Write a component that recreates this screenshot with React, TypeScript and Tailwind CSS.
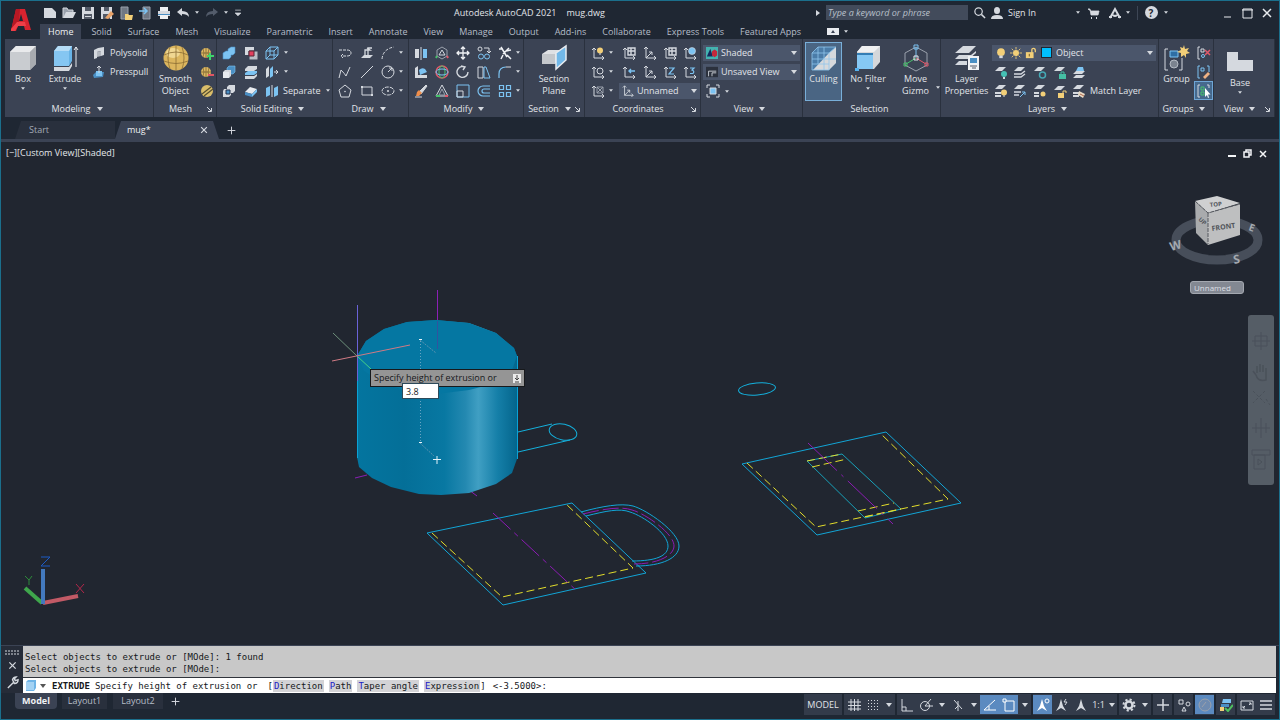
import type { ReactNode } from 'react'

const L = '#d5d9df'
const B = '#7cc3f2'
const D = '#4a8fc4'
const Y = '#f2cf78'
const G = '#9aa1ac'

/* 14x14 toolbar glyphs */
const glyphs: Record<string, ReactNode> = {
  polysolid: <><path d="M2 4l4-2 6-1v8l-3 1V5L5 6v6l-3 1z" fill={L} stroke="none" /><path d="M5 6l4-1v5L5 11z" fill="#b4b9c1" stroke="none" /></>,
  presspull: <><path d="M1 10l3-3h8l-1 5-9 1z" fill={D} stroke="none" /><path d="M4 6h6v5H4z" fill={B} stroke="none" /><path d="M7 1v7M5 3l2-2 2 2" stroke={L} /></>,
  meshMore: <><circle cx="6" cy="7" r="5" fill="#dfb963" stroke="none" /><path d="M1 7h10M6 2v10M3 3q2 4 0 8M9 3q-2 4 0 8" stroke="#6e5a2c" strokeWidth=".7" /><path d="M10 7v7M7 10h7" stroke="#3fd46b" strokeWidth="2" /></>,
  meshLess: <><circle cx="6" cy="7" r="5" fill="#dfb963" stroke="none" /><path d="M1 7h10M6 2v10M3 3q2 4 0 8M9 3q-2 4 0 8" stroke="#6e5a2c" strokeWidth=".7" /><path d="M8 10h6" stroke="#e05563" strokeWidth="2" /></>,
  meshRefine: <><circle cx="7" cy="7" r="6" fill="#d9bd6a" stroke="none" /><path d="M2 10l9-7M4 12l9-7" stroke="#57502f" strokeWidth="1.2" /></>,
  union: <path d="M1 7l3-2h2V3l3-2h4v6l-2 2H9v2l-2 2H1z" fill={B} stroke={D} strokeWidth=".6" />,
  subtract: <><path d="M5 3l2-2h6v6l-2 2H5z" fill={D} stroke={B} strokeWidth=".6" /><path d="M1 7l2-2h6v6l-2 2H1z" fill={L} stroke="none" /><path d="M1 7h6v6H1z" fill="#e7eaef" stroke="none" /></>,
  intersect: <><path d="M5 3l2-2h6v6l-2 2H5z" fill={L} stroke="none" /><path d="M1 7l1-2h7v6l-2 2H1z" fill={L} stroke="none" /><path d="M4 6h4v4H4z" fill={D} stroke="#22304a" /></>,
  interfere: <><path d="M1 1h9v8H1z" fill={L} stroke="none" /><path d="M5 5h9v9H5z" fill="#b9bec6" stroke="#3b4354" /><path d="M5 5h5v5H5z" fill="#e3405f" stroke="#5c2434" /></>,
  slice: <><path d="M1 4l3-3h9v3l-3 2H1z" fill={L} stroke="none" /><path d="M1 8l3-2h9v2l-3 2H1z" fill={B} stroke="none" /><path d="M1 11h9l3-2v2l-3 3H1z" fill={L} stroke="none" /></>,
  thicken: <><path d="M1 8l5-5 7 2-5 5z" fill="#e9ecf0" stroke="none" /><path d="M1 8l7 2v3L1 11z" fill={D} stroke="none" /><path d="M8 10l5-5v3l-5 5z" fill={B} stroke="none" /></>,
  edges: <path d="M1 5h8v8H1zM1 5l4-4h8v8l-4 4M9 5l4-4M5 1v8h8M5 9l-4 4" stroke={B} />,
  faces: <><path d="M1 4l3-3v10l-3 2z" fill={L} stroke="none" /><path d="M5 4l3-3v10l-3 2z" fill={B} stroke="none" /><path d="M9 7h4M11 5l2 2-2 2" stroke={L} /></>,
  separate: <><path d="M1 4l4-2v9l-4 2z" fill={B} stroke="none" /><path d="M9 4l4-2v9l-4 2z" fill={B} stroke="none" /><path d="M7 1v12" stroke={L} /></>,
  polyline: <path d="M1 4h8q4 0 4 3t-4 3H3M5 8l-2 2 2 2" stroke={L} strokeDasharray="3 1" />,
  helix: <><path d="M1 12l3-3h9l-3 3z" fill={L} stroke="none" /><path d="M5 9V4h5l-3-2M8 9V2h4" stroke={L} strokeWidth="1.3" /></>,
  arc: <path d="M1 13Q2 3 13 1" stroke={L} strokeDasharray="3 1.5" />,
  spline: <path d="M1 13l2-8q4 4 5 6l4-9" stroke={L} />,
  line: <path d="M1 13L13 1" stroke={L} />,
  circle: <><circle cx="7" cy="7" r="6" stroke={L} /><path d="M7 7l4-4M8 3h3v3" stroke={L} /></>,
  polygon: <><path d="M7 1l6 5-2 7H3L1 6z" stroke={L} /><circle cx="7" cy="7.5" r=".8" fill={L} /></>,
  rect: <><path d="M2 3h10v8H2z" stroke={L} /><path d="M1 2h2v2H1zM11 10h2v2h-2z" fill={L} stroke="none" /></>,
  ellipse: <><ellipse cx="7" cy="7" rx="6" ry="4" stroke={L} strokeDasharray="4 1" /><path d="M6 7h2M7 6v2" stroke={L} /></>,
  mirror: <><path d="M1 3h4v9H1z" fill={L} stroke="none" /><path d="M9 3h4v9H9z" fill={B} stroke="none" /><path d="M7 1v13" stroke={L} /></>,
  fillet3d: <><path d="M1 3l3-2v9h9v3H1z" fill={L} stroke="none" /><path d="M5 5q3-3 6-1l2 3-7 3z" fill={B} stroke="none" /></>,
  erase: <><path d="M5 8l7-7 1 1-6 8z" fill={L} stroke={L} /><path d="M5 6l3 3-3 3H2l1-4z" fill="#ef8d4a" stroke="none" /><path d="M1 13h7" stroke={L} /></>,
  gizmo1: <><path d="M7 1l5 3v6l-5 3-5-3V4z" stroke={G} /><path d="M7 4l3 5H4z" stroke={L} /><path d="M2 10l-1 2" stroke="#47c26b" strokeWidth="2" /><path d="M12 10l1 2" stroke="#e2596a" strokeWidth="2" /></>,
  gizmo2: <><circle cx="7" cy="7" r="6" stroke="#e2596a" strokeWidth="1.4" /><ellipse cx="7" cy="7" rx="3" ry="6" stroke="#47c26b" /><ellipse cx="7" cy="7" rx="6" ry="3" stroke={B} /></>,
  gizmo3: <><path d="M7 1l6 11H1z" stroke={L} /><path d="M7 5l3 6H4z" stroke={G} /><path d="M1 12h4" stroke="#47c26b" strokeWidth="2" /><path d="M10 12h3" stroke="#e2596a" strokeWidth="2" /></>,
  move: <path d="M7 1v12M1 7h12M5 3l2-2 2 2M5 11l2 2 2-2M3 5L1 7l2 2M11 5l2 2-2 2" stroke="#f0f2f5" strokeWidth="1.3" />,
  rotate: <path d="M9 2a5.5 5.5 0 1 0 3 5M5 1l4 1-2 3" stroke={L} strokeWidth="1.4" />,
  scale: <><path d="M1 1h12v12H1z" stroke={B} /><path d="M1 7h6v6H1z" stroke={L} /></>,
  copy: <><circle cx="3" cy="3" r="2" stroke={L} /><path d="M7 2h5v4M10 5l2 2 2-2" stroke={L} /><circle cx="4" cy="10.5" r="2.5" stroke={B} /><circle cx="10" cy="10.5" r="2.5" stroke={B} /></>,
  stretch: <><path d="M1 2h5v11H1z" stroke={L} /><path d="M7 2h2l4 11H7z" stroke={B} /></>,
  offset: <path d="M13 2H6a5 5 0 0 0 0 10h7M13 5H7a2 2 0 0 0 0 4h6" stroke={B} strokeWidth="1.2" />,
  trim: <path d="M1 3h4M3 1l6 10M11 2L5 8M9 9l4 4M8 5l5-1M5 9l-2 4" stroke="#f0f2f5" strokeWidth="1.5" />,
  fillet: <><path d="M1 13V9q0-7 7-7" stroke={B} strokeWidth="1.2" /><path d="M8 2h5" stroke={L} /></>,
  array: <path d="M1.500 1.500h4v4h-4zM8.500 1.500h4v4h-4zM1.500 8.500h4v4h-4zM8.500 8.500h4v4h-4z" stroke={B} strokeWidth="1.2" />,
  ucs: <path d="M3 1v11h10M1 3l2-2 2 2M11 10l2 2-2 2M3 12l6-6M6 6h3v3" stroke={L} />,
  ucsBulb: <><path d="M3 2v10h10M1 4l2-2 2 2M11 10l2 2-2 2" stroke={L} /><circle cx="9" cy="4.500" r="3" fill={Y} stroke="none" /><path d="M8 8h2" stroke={L} /></>,
  ucsWorld: <><path d="M3 2v10h10M1 4l2-2 2 2M11 10l2 2-2 2" stroke={L} /><circle cx="9" cy="5" r="3.500" fill={B} stroke={L} strokeWidth=".6" /></>,
  ucsNamed: <><path d="M3 2v10h10M1 4l2-2 2 2M11 10l2 2-2 2" stroke={L} /><path d="M6 2h7v7H6zM6 5h7M9 2v7" stroke={L} strokeWidth="1.4" /></>,
  ucsTurn: <><path d="M3 2v10h10M1 4l2-2 2 2M11 10l2 2-2 2" stroke={L} /><circle cx="9" cy="6" r="3" stroke={L} /></>,
  ucsArrow: <><path d="M3 2v10h10M1 4l2-2 2 2M11 10l2 2-2 2" stroke={L} /><path d="M13 6H7M9 4L7 6l2 2" stroke={B} strokeWidth="1.4" /></>,
  ucsZ: <><path d="M3 2v10h10M1 4l2-2 2 2M11 10l2 2-2 2" stroke={L} /><path d="M6 3h5L6 9h5" stroke={B} strokeWidth="1.2" /></>,
  ucs3: <><path d="M3 2v10h10M1 4l2-2 2 2M11 10l2 2-2 2" stroke={L} /><path d="M7 3h4L9 5q3 1 1 3.500H7" stroke={B} strokeWidth="1.2" /></>,
  ucsFace: <><path d="M3 2v10h10M1 4l2-2 2 2M11 10l2 2-2 2" stroke={L} /><path d="M6 3h6v6H6zM6 3l6 6M12 3L6 9" stroke={G} /></>,
  shaded: <><path d="M0 0h14v14H0z" fill="#43b3b0" stroke="none" /><path d="M1 11l4-9 3 9z" fill="#152a5e" stroke="none" /><path d="M7 5l3-2 3 2v5l-3 2-3-2z" fill="#c4283b" stroke="none" /></>,
  savedView: <><path d="M0 1h14v12H0z" fill="#2b313d" stroke="none" /><path d="M3 12V6h9M7 12V8h5" stroke={L} /></>,
  viewport: <><path d="M1 4V1h3M10 1h3v3M13 10v3h-3M4 13H1v-3" stroke={L} /><path d="M4 4h6v6H4z" fill={B} stroke={L} /></>,
  bulb: <><circle cx="7" cy="6" r="4.500" fill={Y} stroke="none" /><path d="M5 10h4v3H5z" fill={L} stroke="none" /></>,
  sun: <><circle cx="7" cy="7" r="3.500" fill={Y} stroke="none" /><path d="M7 0v3M7 11v3M0 7h3M11 7h3M2 2l2 2M10 10l2 2M12 2l-2 2M4 10l-2 2" stroke={Y} /></>,
  lock: <><path d="M1 6h9v7H1z" fill={Y} stroke="none" /><path d="M8 7V3q0-1.500 2-1.500T12 4v2" stroke={Y} strokeWidth="1.5" /><path d="M5 8v3" stroke="#5c4a1e" /></>,
  layOff: <><path d="M1 6l4-4h7L8 6z" fill={L} stroke="none" /><circle cx="10" cy="9" r="3" fill="#45c0b4" stroke="none" /><path d="M9 12h2v2H9z" fill={L} stroke="none" /></>,
  layIso: <><path d="M1 6l4-4h7L8 6z" fill={L} stroke="none" /><path d="M1 9h7l4-3M1 12h7l4-3" stroke={L} strokeWidth="1.4" /></>,
  layFreeze: <><path d="M1 6l4-4h7L8 6z" fill={L} stroke="none" /><circle cx="9.500" cy="10" r="3" stroke="#45a8b4" strokeWidth="1.5" /></>,
  layLock: <><path d="M1 6l4-4h7L8 6z" fill={L} stroke="none" /><path d="M6 9h7v5H6z" fill="#45c0a4" stroke="none" /><path d="M8 9V7h3v2" stroke="#45c0a4" /></>,
  layCurrent: <><path d="M1 13l3-3h9l-3 3zM1 9l3-3h9l-3 3z" fill={L} stroke="none" /><path d="M4 6l2-4h5l1 4z" fill={B} stroke="none" /></>,
  layOn: <><path d="M1 5l4-4h7L8 5zM1 8h6v2H1zM1 11h6v2H1z" fill={L} stroke="none" /><circle cx="10" cy="8.500" r="3" fill={Y} stroke="none" /><path d="M9 12h2" stroke={L} /></>,
  layUniso: <><path d="M1 5l4-4h7L8 5z" fill={L} stroke="none" /><path d="M1 8h7M1 11h5" stroke={L} strokeWidth="1.6" /><path d="M7 13l5-5M9 8h3v3" stroke={B} /></>,
  layThaw: <><path d="M1 5l4-4h7L8 5zM1 8h5v2H1zM1 11h5v2H1z" fill={L} stroke="none" /><circle cx="10" cy="10" r="2.500" fill={Y} stroke="none" /></>,
  layUnlock: <><path d="M1 6l4-4h7L8 6z" fill={L} stroke="none" /><path d="M5 9h6v5H5z" fill={Y} stroke="none" /><path d="M10 9V7h3v2" stroke={Y} /></>,
  layMatch: <><path d="M1 5l4-4h7L8 5zM1 8h6v2H1zM1 11h6v2H1z" fill={L} stroke="none" /><path d="M7 7l6 3-2 4-5-3z" fill="#e9dcc6" stroke="none" /><path d="M8 10l4 2" stroke="#b0664a" /></>,
  ungroup: <><path d="M3 1H1v12h2M4 3h3v3H4z" stroke={L} /><circle cx="6" cy="10" r="1.500" stroke={B} /><path d="M8 4l5 5M13 4L8 9" stroke="#e2596a" strokeWidth="1.5" /></>,
  groupEdit: <><path d="M3 1H1v12h2M10 1h2v6M4 3h3v3H4z" stroke={B} /><path d="M6 12l5-5 2 2-5 5z" fill="#efb183" stroke="none" /></>,
  groupSelect: <><path d="M3 1H1v12h2M10 1h2v3" stroke={L} /><path d="M4 3h3v3H4zM4 8h3v3H4z" stroke="#47c26b" /><path d="M8 4v9l2-2 1 3 1-.5-1-3h2.500z" fill="#fff" stroke="none" /></>,
  newFile: <path d="M1 2h8l4 4v6H1z" fill={L} stroke="none" />,
  open: <><path d="M1 12V2h4l1 2h5v3" stroke={L} fill="#9aa1ac" /><path d="M1 12l3-6h10l-3 6z" fill={L} stroke="none" /></>,
  save: <><path d="M1 1h12v12H1z" fill={L} stroke="none" /><path d="M4 1h6v4H4zM3 8h8v5H3z" fill="#525966" stroke="none" /><path d="M4 10h6v1H4z" fill={L} stroke="none" /></>,
  saveAs: <><path d="M1 1h11v12H1z" fill={L} stroke="none" /><path d="M4 1h5v4H4zM3 8h7v5H3z" fill="#525966" stroke="none" /><path d="M5 12l6-7 3 3-6 5z" fill="#e8a36a" stroke="none" /></>,
  webOpen: <><path d="M2 1h7v12H2z" fill="#6f7783" stroke={G} /><path d="M6 8h3l1 1h4l-1 5H6z" fill={Y} stroke="none" /></>,
  webSave: <><path d="M5 1h7v12H5z" fill="#6f7783" stroke={G} /><path d="M1 5h7M6 2l3 3-3 3" stroke={B} strokeWidth="1.5" /></>,
  print: <><path d="M3 1h8v4H3z" fill="#eef0f3" stroke="none" /><path d="M1 5h12v5H1z" fill={L} stroke="none" /><path d="M1 8h12v1H1z" fill={D} stroke="none" /><path d="M3 9h8v4H3z" fill="#eef0f3" stroke="none" /></>,
  undo: <path d="M1 6l5-4v3q7 0 7 6-2-3-7-3v2z" fill={L} stroke="none" />,
  redo: <path d="M13 6L8 2v3q-7 0-7 6 2-3 7-3v2z" fill="#535c6b" stroke="none" />,
  customize: <path d="M3 3h8M3 7h8l-4 4z" stroke={L} fill={L} />,
  search: <><circle cx="6" cy="6" r="4" stroke={L} strokeWidth="1.3" /><path d="M9 9l4 4" stroke={L} strokeWidth="1.6" /></>,
  user: <><ellipse cx="7" cy="4.500" rx="3" ry="3.500" fill={L} stroke="none" /><path d="M1 13q0-4 6-4t6 4z" fill={L} stroke="none" /></>,
  cart: <><path d="M2 3h2l1 6h7l1-4H5z" fill={L} stroke={L} strokeWidth=".8" /><path d="M5 12h1M10 12h1" stroke={L} strokeWidth="2" /></>,
  appStore: <path d="M2 12l5-9 5 9M1 11h3M10 11h3M5 9q2 2 4 0" stroke={L} strokeWidth="2" />,
  grid: <path d="M4 1v12M7.500 1v12M11 1v12M1 4h13M1 7.500h13M1 11h13" stroke={L} />,
  snap: <path d="M2 2.500h11M2 5.500h11M2 8.500h11M2 11.500h11" stroke={L} strokeDasharray="1 2" />,
  ortho: <path d="M2 1v12h11M2 9h4v4" stroke={L} />,
  polar: <><circle cx="6" cy="8" r="4.500" stroke={L} /><path d="M6 8h8M6 8l6-7" stroke={L} /></>,
  isoplane: <path d="M3 2l8 9M7 3v10M7 8l-3 3" stroke={L} />,
  otrack: <path d="M1 12h12M1 12L12 2M6 8v4" stroke="#fff" />,
  osnap: <><path d="M3 3h9v10H3z" stroke="#fff" /><path d="M1 1h3v3H1z" fill="#5b8ac0" stroke="#fff" /></>,
  annoVis: <><path d="M6 1l2 7 3 5-5-3-5 3 3-5z" fill="#fff" stroke="none" /><circle cx="11" cy="3" r="2" stroke="#fff" /></>,
  annoAuto: <><path d="M6 1l2 7 3 5-5-3-5 3 3-5z" fill={L} stroke="none" /><path d="M11 1l-2 3h3l-2 3" stroke={L} /></>,
  anno: <path d="M7 1l2 7 3 5-5-3-5 3 3-5z" fill={L} stroke="none" />,
  gear: <><circle cx="7" cy="7" r="5.500" stroke={L} strokeDasharray="2.200 2.100" strokeWidth="2" /><circle cx="7" cy="7" r="3.500" stroke={L} strokeWidth="2.500" /></>,
  plus: <path d="M7 1v12M1 7h12" stroke={L} strokeWidth="1.5" />,
  units: <><path d="M2 2h4v4H2zM5 13l2-4 2 4z" stroke={L} /><circle cx="11" cy="6" r="2" stroke={L} /></>,
  isolate: <><circle cx="7" cy="7" r="6" fill="#6f8bb0" stroke={G} /><path d="M4 9l4-5" stroke={G} /></>,
  hardware: <><path d="M4 1h8v4H3z" fill={B} stroke="none" /><path d="M2 6h8v3H2z" fill={D} stroke="none" /><path d="M1 9h4v4H1z" fill={Y} stroke="none" /><path d="M6 10l3 3 5-6" stroke="#4fc05f" strokeWidth="2" /></>,
  clean: <><path d="M1 3h12v9H1z" stroke={L} /><path d="M3 10l2-2M9 7l2-2M3 8v2h2M9 5h2v2" stroke={L} /></>,
  menu: <path d="M1 3h12M1 7h12M1 11h12" stroke={L} strokeWidth="1.6" />,
  close: <path d="M3 3l8 8M11 3l-8 8" stroke={L} strokeWidth="1.6" />,
  wrench: <path d="M2 13l6-6M7 4q1-3 4-3L9 3l1 2 3-1q0 4-4 4z" stroke={L} strokeWidth="1.5" />,
}

function Glyph({ name, size = 14 }: { name: string; size?: number }) {
  return (
    <svg width={size} height={size} viewBox="0 0 14 14" fill="none" className="shrink-0" aria-hidden="true">
      {glyphs[name]}
    </svg>
  )
}

function Caret({ small }: { small?: boolean }) {
  return (
    <svg width={small ? 4 : 6} height={small ? 3 : 4} viewBox="0 0 6 4" className="shrink-0" aria-hidden="true">
      <path d="M0 0h6L3 4z" fill="#d5d9df" />
    </svg>
  )
}

interface ToolProps {
  icon: string
  label: string
  text?: boolean
  caret?: boolean
  active?: boolean
}

function Tool({ icon, label, text, caret, active }: ToolProps) {
  return (
    <button
      aria-label={label}
      className={`flex h-[19px] items-center gap-1 whitespace-nowrap ${text ? 'justify-start pl-[3px]' : 'justify-center'} ${active ? 'bg-[#46698d] outline outline-1 -outline-offset-1 outline-[#6fa6d6]' : ''}`}
    >
      <Glyph name={icon} />
      {text && <span>{label}</span>}
      {caret && <span className={text ? 'pl-[2px]' : ''}><Caret small /></span>}
    </button>
  )
}

interface BigToolProps {
  lines: string[]
  children: ReactNode
  caret?: boolean
  className?: string
}

function BigTool({ lines, children, caret, className = '' }: BigToolProps) {
  return (
    <button className={`flex h-[57px] shrink-0 flex-col items-center pt-px leading-[12px] ${className}`}>
      <svg width="28" height="28" viewBox="0 0 28 28" fill="none" className="mb-px shrink-0" aria-hidden="true">{children}</svg>
      {lines.map((line) => (
        <span key={line} className="whitespace-nowrap">{line}</span>
      ))}
      {caret && <span className="flex h-[6px] items-center"><Caret small /></span>}
    </button>
  )
}

interface PanelProps {
  title: string
  caret?: boolean
  launcher?: boolean
  children: ReactNode
}

function Panel({ title, caret, launcher, children }: PanelProps) {
  return (
    <section className="flex min-w-0 flex-col border-r border-[#2a313e] pt-1">
      <div className="flex h-[57px]">{children}</div>
      <div className="flex h-[17px] items-center pt-px pr-1">
        <h2 className="flex flex-1 items-center justify-center gap-[6px] whitespace-nowrap">
          {title}
          {caret && <Caret />}
        </h2>
        {launcher && (
          <button aria-label={`${title} settings`}>
            <svg width="5" height="5" viewBox="0 0 5 5" fill="none"><path d="M0 0l4 4M1 4.500h3.500V1" stroke="#d5d9df" /></svg>
          </button>
        )}
      </div>
    </section>
  )
}

function Combo({ label, value, children, className = '' }: { label: string; value: string; children: ReactNode; className?: string }) {
  return (
    <label className={`flex h-4 items-center gap-[3px] bg-[#4b566b] px-[3px] ${className}`}>
      {children}
      <select aria-label={label} className="min-w-0 flex-1 appearance-none bg-transparent text-[9px] outline-none">
        <option>{value}</option>
      </select>
      <Caret />
    </label>
  )
}

const quickAccess = [
  ['newFile', 'New'], ['open', 'Open'], ['save', 'Save'], ['saveAs', 'Save As'],
  ['webOpen', 'Open from Web'], ['webSave', 'Save to Web'], ['print', 'Plot'],
]

const ribbonTabs = [
  'Solid', 'Surface', 'Mesh', 'Visualize', 'Parametric', 'Insert', 'Annotate', 'View', 'Manage',
  'Output', 'Add-ins', 'Collaborate', 'Express Tools', 'Featured Apps',
]

function Header() {
  return (
    <header className="flex h-[38px] shrink-0">
      <button aria-label="Application menu" className="flex w-[39px] items-center justify-center">
        <svg width="22" height="26" viewBox="0 0 22 26">
          <path d="M6 2h9l6 21h-6l-1-4H8l-2 5H1z" fill="#d8232f" />
          <path d="M11 7l2 7H9z" fill="#1f2733" />
          <path d="M6 2h4l-1 12-3 9H1z" fill="#b81824" />
          <path d="M1 22l6-7h8l1 4H8l-3 5H1z" fill="#ef3f48" />
        </svg>
      </button>
      <div className="flex min-w-0 flex-1 flex-col">
        <div className="flex h-[23px] items-center">
          <div className="flex items-center">
            {quickAccess.map(([icon, label]) => (
              <button key={icon} aria-label={label} className="flex w-[19px] justify-center"><Glyph name={icon} /></button>
            ))}
            <button aria-label="Undo" className="flex w-[29px] items-center justify-center gap-[5px]"><Glyph name="undo" /><Caret small /></button>
            <button aria-label="Redo" className="flex w-[29px] items-center justify-center gap-[5px]"><Glyph name="redo" /><Caret small /></button>
            <button aria-label="Customize" className="ml-[2px]"><Glyph name="customize" size={10} /></button>
          </div>
          <h1 className="flex flex-1 justify-center gap-[10px] whitespace-nowrap">
            <span>Autodesk AutoCAD 2021</span>
            <span>mug.dwg</span>
          </h1>
          <div className="mr-[3px] flex items-center">
            <svg width="4" height="6" viewBox="0 0 4 6" className="mr-[6px]"><path d="M0 0l4 3-4 3z" fill="#d5d9df" /></svg>
            <input
              aria-label="Search"
              placeholder="Type a keyword or phrase"
              className="h-[15px] w-[142px] bg-[#424b5b] px-[2px] text-[9px] italic outline-none placeholder:text-[#b9c0ca]"
            />
            <button aria-label="Search" className="flex w-[22px] justify-center"><Glyph name="search" size={13} /></button>
            <button className="flex items-center gap-1 whitespace-nowrap"><Glyph name="user" />Sign In</button>
            <button aria-label="Account" className="ml-[36px] flex w-3 justify-center"><Caret small /></button>
            <button aria-label="Store" className="flex w-[18px] justify-center"><Glyph name="cart" /></button>
            <button aria-label="Apps" className="mr-[2px] flex w-[33px] items-center justify-center gap-1"><Glyph name="appStore" /><Caret small /></button>
            <span className="h-[14px] w-px bg-[#3d4655]" />
            <button aria-label="Help" className="flex w-[36px] items-center justify-center gap-[6px]">
              <span className="flex h-[13px] w-[13px] items-center justify-center rounded-full bg-[#d5d9df] text-[10px] font-bold text-[#1f2733]">?</span>
              <Caret small />
            </button>
            <svg width="62" height="14" viewBox="0 0 62 14" fill="none" className="ml-[40px]" stroke="#e8ebef">
              <path d="M10 11h7M29 3h9v9h-9zM28 4h11" />
              <path d="M49 3l8 8M57 3l-8 8" strokeWidth="1.5" />
            </svg>
          </div>
        </div>
        <nav className="flex h-[15px] items-stretch whitespace-nowrap text-[#b6bdc8]">
          <button className="mr-[2px] bg-[#3b4354] px-2 text-[#eef0f3]">Home</button>
          {ribbonTabs.map((tab) => <button key={tab} className="px-2">{tab}</button>)}
          <button aria-label="Minimize ribbon" className="ml-[18px] flex items-center gap-[5px]">
            <svg width="12" height="7" viewBox="0 0 12 7"><path d="M0 0h12v7H0z" fill="#e8ebef" /><path d="M4 5l2-3 2 3z" fill="#3b4354" /></svg>
            <Caret small />
          </button>
        </nav>
      </div>
    </header>
  )
}

function Ribbon() {
  return (
    <div className="mx-1 grid h-[78px] shrink-0 grid-cols-[149fr_63fr_116fr_76fr_115fr_61fr_116fr_102fr_138fr_218fr_55fr_61fr] bg-[#3b4354]">
      <Panel title="Modeling" caret>
        <BigTool lines={['Box']} caret className="w-[36px]">
          <path d="M1 8l6-6h20v18l-6 6H1z" fill="#c9ccd0" /><path d="M1 8l6-6h20l-6 6z" fill="#e9eaec" /><path d="M21 8l6-6v18l-6 6z" fill="#a8abb0" />
        </BigTool>
        <BigTool lines={['Extrude']} caret className="w-[48px]">
          <path d="M3 7l4-5h14v15l-3 5H3z" fill="#67b3e6" /><path d="M3 7l4-5h14l-3 5z" fill="#b5dcf6" /><path d="M3 7h15v15H3z" fill="#85c6f2" />
          <path d="M3 23h15l3-4v3l-3 5H3z" fill="#d5d9df" /><path d="M25 23V3M23 6l2-3 2 3" stroke="#e8ebef" />
        </BigTool>
        <div className="flex flex-col">
          <Tool icon="polysolid" label="Polysolid" text />
          <Tool icon="presspull" label="Presspull" text />
        </div>
      </Panel>
      <Panel title="Mesh" launcher>
        <BigTool lines={['Smooth', 'Object']} className="w-[43px]">
          <circle cx="14" cy="14" r="12.500" fill="#dcb65e" /><ellipse cx="11" cy="9" rx="7" ry="5" fill="#f0d791" />
          <path d="M2 11q12-6 24 0M2 17q12 5 24 0M14 1.500v25M8 3q-4 11 0 22M20 3q4 11 0 22" stroke="#8a6c33" strokeWidth=".8" />
        </BigTool>
        <div className="grid flex-1">
          <Tool icon="meshMore" label="Smooth more" />
          <Tool icon="meshLess" label="Smooth less" />
          <Tool icon="meshRefine" label="Refine mesh" />
        </div>
      </Panel>
      <Panel title="Solid Editing" caret>
        <div className="grid grid-cols-[23px_22px_69px]">
          <Tool icon="union" label="Union" />
          <Tool icon="interfere" label="Interfere" />
          <div className="flex items-center gap-[5px] pl-[3px]"><Glyph name="edges" /><Caret small /></div>
          <Tool icon="subtract" label="Subtract" />
          <Tool icon="slice" label="Slice" />
          <div className="flex items-center gap-[5px] pl-[3px]"><Glyph name="faces" /><Caret small /></div>
          <Tool icon="intersect" label="Intersect" />
          <Tool icon="thicken" label="Thicken" />
          <Tool icon="separate" label="Separate" text caret />
        </div>
      </Panel>
      <Panel title="Draw" caret>
        <div className="grid grid-cols-[24px_19px_32px]">
          <Tool icon="polyline" label="Polyline" />
          <Tool icon="helix" label="Polysolid path" />
          <Tool icon="arc" label="Arc" caret />
          <Tool icon="spline" label="Spline" />
          <Tool icon="line" label="Line" />
          <Tool icon="circle" label="Circle" caret />
          <Tool icon="polygon" label="Polygon" />
          <Tool icon="rect" label="Rectangle" />
          <Tool icon="ellipse" label="Ellipse" caret />
        </div>
      </Panel>
      <Panel title="Modify" caret>
        <div className="grid grid-cols-[23px_20px_21px_22px_28px]">
          <Tool icon="mirror" label="3D Mirror" />
          <Tool icon="gizmo1" label="3D Move" />
          <Tool icon="move" label="Move" />
          <Tool icon="copy" label="Copy" />
          <Tool icon="trim" label="Trim" caret />
          <Tool icon="fillet3d" label="3D Align" />
          <Tool icon="gizmo2" label="3D Rotate" />
          <Tool icon="rotate" label="Rotate" />
          <Tool icon="stretch" label="Stretch" />
          <Tool icon="fillet" label="Fillet" caret />
          <Tool icon="erase" label="Erase" />
          <Tool icon="gizmo3" label="3D Scale" />
          <Tool icon="scale" label="Scale" />
          <Tool icon="offset" label="Offset" />
          <Tool icon="array" label="Array" caret />
        </div>
      </Panel>
      <Panel title="Section" caret launcher>
        <BigTool lines={['Section', 'Plane']} className="w-full">
          <path d="M2 10l6-4h13v9l-6 5H2z" fill="#dfe1e4" /><path d="M2 10h13v10H2z" fill="#c4c7cb" />
          <path d="M16 9l10-7v14l-10 9z" fill="#72b8e8" stroke="#e8ebef" strokeWidth="1.5" />
        </BigTool>
      </Panel>
      <Panel title="Coordinates" launcher>
        <div className="grid grid-cols-[34px_20px_21px_20px_20px]">
          <Tool icon="ucsBulb" label="UCS icon" caret />
          <Tool icon="ucsNamed" label="Named UCS" />
          <Tool icon="ucs" label="UCS" />
          <Tool icon="ucsNamed" label="UCS settings" />
          <Tool icon="ucsWorld" label="World UCS" />
          <Tool icon="ucsTurn" label="Rotate UCS" caret />
          <Tool icon="ucsArrow" label="Previous UCS" />
          <Tool icon="ucs" label="Origin" />
          <Tool icon="ucsZ" label="Z-Axis vector" />
          <Tool icon="ucs3" label="3-Point" />
          <Tool icon="ucsFace" label="Face UCS" caret />
          <Combo label="Named UCS" value="Unnamed" className="col-span-4 self-center"><Glyph name="ucs" size={12} /></Combo>
        </div>
      </Panel>
      <Panel title="View" caret>
        <div className="grid flex-1 grid-cols-1 items-center px-[2px]">
          <Combo label="Visual style" value="Shaded"><Glyph name="shaded" size={12} /></Combo>
          <Combo label="Saved view" value="Unsaved View"><Glyph name="savedView" size={12} /></Combo>
          <div className="flex items-center gap-[5px] pl-[3px]"><Glyph name="viewport" /><Caret small /></div>
        </div>
      </Panel>
      <Panel title="Selection">
        <BigTool lines={['Culling']} className="ml-[3px] w-[35px] bg-[#4a6583] outline outline-1 outline-[#79afd9]">
          <path d="M2 9l6-6h18v16l-7 7H2z" fill="#4b7ca8" /><path d="M26 3v16l-7 7H3L19 9z" fill="#d7d9dc" />
          <path d="M2 9h17v17H2zM2 9l6-6h18l-7 6M8 3v17M14 3v23M2 15h24M2 20h17" stroke="#8fc5ec" strokeWidth=".8" />
        </BigTool>
        <BigTool lines={['No Filter']} caret className="w-[54px]">
          <path d="M3 8l5-6h18v16l-6 7H3z" fill="#d5d7da" /><path d="M3 8l5-6h18l-6 6z" fill="#f0f1f2" /><path d="M3 10h16v15H3z" fill="#86c8f4" />
          <path d="M3 10h16" stroke="#347eb5" strokeWidth="2" /><path d="M1 24h4v3H1z" fill="#56b2ee" />
        </BigTool>
        <div className="flex flex-1 items-center">
          <BigTool lines={['Move', 'Gizmo']} className="w-[41px]">
            <path d="M14 3l11 6v12l-11 6-11-6V9z" stroke="#9aa1ac" /><path d="M14 14V3" stroke="#7cc3f2" /><path d="M14 14L4 20" stroke="#47c26b" /><path d="M14 14l10 6" stroke="#e2596a" />
            <path d="M12 1h4v4h-4z" stroke="#7cc3f2" /><path d="M2 19h3v3H2z" stroke="#47c26b" /><path d="M23 19h3v3h-3z" stroke="#e2596a" /><path d="M12 12h4v4h-4z" stroke="#e8ebef" />
          </BigTool>
          <span className="pt-8"><Caret small /></span>
        </div>
      </Panel>
      <Panel title="Layers" caret>
        <BigTool lines={['Layer', 'Properties']} className="w-[51px]">
          <path d="M2 9l8-7h13l-7 7zM2 15l4-4h12l5-4v2l-7 6zM2 21l4-4h8v4z" fill="#d5d9df" />
          <path d="M15 12h11v14H15z" fill="#f0f2f5" /><path d="M17 14h7v5h-7z" fill="#4a8fc4" /><path d="M17 22h7M19 24h4" stroke="#525966" />
        </BigTool>
        <div className="flex flex-1 flex-col pr-[2px]">
          <div className="flex h-[19px] items-center">
            <Combo label="Layer" value="Object" className="flex-1">
              <Glyph name="bulb" size={12} /><Glyph name="sun" size={12} /><Glyph name="lock" size={12} />
              <span className="mx-px h-[11px] w-[11px] border border-[#1f2733] bg-[#00bfff]" />
            </Combo>
          </div>
          <div className="grid grid-cols-[18px_20px_20px_19px_19px]">
            <Tool icon="layOff" label="Layer off" /><Tool icon="layIso" label="Isolate" /><Tool icon="layFreeze" label="Freeze" />
            <Tool icon="layLock" label="Lock" /><Tool icon="layCurrent" label="Make current" />
          </div>
          <div className="grid grid-cols-[18px_20px_20px_19px_80px]">
            <Tool icon="layOn" label="Turn all on" /><Tool icon="layUniso" label="Unisolate" /><Tool icon="layThaw" label="Thaw all" />
            <Tool icon="layUnlock" label="Unlock" /><Tool icon="layMatch" label="Match Layer" text />
          </div>
        </div>
      </Panel>
      <Panel title="Groups" caret>
        <BigTool lines={['Group']} className="w-[35px]">
          <path d="M5 5H2v21h3M16 26h3V14" stroke="#d5d9df" /><path d="M7 7h8v6H7z" fill="#2f6ea3" stroke="#7cc3f2" /><circle cx="11" cy="20" r="4" fill="#7b838f" stroke="#b4bac3" />
          <path d="M21 1l1 4 4-1-2 3 3 2-4 1v4l-2-3-3 2v-4l-4-1 4-2-1-3 3 1z" fill="#f2cf78" />
        </BigTool>
        <div className="grid flex-1">
          <Tool icon="ungroup" label="Ungroup" />
          <Tool icon="groupEdit" label="Group edit" />
          <Tool icon="groupSelect" label="Group selection" active />
        </div>
      </Panel>
      <Panel title="View" caret launcher>
        <div className="flex-1 pr-2">
          <BigTool lines={['Base']} caret className="mt-1 w-full">
            <path d="M1 4h11v8h15v11H1z" fill="#d5d9df" />
          </BigTool>
        </div>
      </Panel>
    </div>
  )
}

function FileTabs() {
  return (
    <div className="flex h-[25px] shrink-0 items-end border-b-[3px] border-[#3b4354] pl-[14px]">
      <button className="h-[18px] w-[100px] bg-[#29303d] pl-[14px] text-left text-[#a3abb7] [clip-path:polygon(6px_0,100%_0,100%_100%,0_100%)]">Start</button>
      <div className="flex h-[18px] w-[104px] items-center justify-between bg-[#3b4354] pr-[10px] pl-3 [clip-path:polygon(6px_0,98px_0,100%_100%,0_100%)]">
        <button className="text-[#eef0f3]">mug*</button>
        <button aria-label="Close mug"><Glyph name="close" size={10} /></button>
      </div>
      <button aria-label="New drawing" className="ml-[4px] flex h-[18px] w-4 items-center justify-center"><Glyph name="plus" size={9} /></button>
    </div>
  )
}

function Model() {
  return (
    <svg viewBox="2 141 1278 503" className="h-full w-full" fill="none" aria-label="Mug model">
      <defs>
        <linearGradient id="side" x1="357" x2="518" y1="0" y2="0" gradientUnits="userSpaceOnUse">
          <stop offset="0" stopColor="#04759f" />
          <stop offset=".3" stopColor="#046f98" />
          <stop offset=".55" stopColor="#0878a2" />
          <stop offset=".68" stopColor="#2489b1" />
          <stop offset=".76" stopColor="#409fc3" />
          <stop offset=".88" stopColor="#157fa8" />
          <stop offset="1" stopColor="#04658c" />
        </linearGradient>
      </defs>
      {/* centre lines behind the body */}
      <path d="M438.500 289v40M356 477l12-3M470 489l8 6" stroke="#8b1fb5" />
      <path d="M358 355L367 340l18-12 23-7 29-2 33 3 27 10 18 15 3 8v103l-5 14-16 11-27 9-28 2-22-1-28-7-19-9-13-11-2-10z" fill="url(#side)" />
      <path d="M358 355L367 340l18-12 23-7 29-2 33 3 27 10 18 15 3 8-5 14-16 13-27 7-33 4-29-3-25-8-18-12z" fill="#0577a2" />
      <path d="M358.500 355v102M518.500 355v103" stroke="#0aa2d6" />
      <path d="M438.500 320v28" stroke="#31539f" />

      <path d="M358.500 304v76" stroke="#6a62d8" />
      <path d="M334 332l24 23" stroke="#6c8f7a" />
      <path d="M358 355l14 13" stroke="#45d087" />
      <path d="M333 360l78-16" stroke="#d07a84" />
      <path d="M421.500 340v101" stroke="#67a4c4" strokeDasharray="1 2" />
      <path d="M421 339l16 13M421 442l14 13" stroke="#5792b0" strokeDasharray="2 1" />
      <path d="M420 338.500h3M420 441.500h3M438 455v8M434 458.500h8" stroke="#e6f4fa" />

      {/* handle stub */}
      <g stroke="#14b0dc">
        <path d="M519 431l34-8M519 451l52-12" />
        <ellipse cx="564" cy="431" rx="14" ry="8" transform="rotate(12 564 431)" />
        <ellipse cx="758" cy="388" rx="18.500" ry="6" transform="rotate(-5 758 388)" />
      </g>

      {/* front profile */}
      <g stroke="#12a5d6">
        <path d="M428 532l145-30 74 70-143 32z" />
        <path d="M582 511c22-6 40-9 52-6 14 4 46 26 46 40 0 12-17 20-43 20M587 515c20-5 34-8 44-4 13 4 38 21 38 34 0 10-12 15-36 15" />
        <path d="M743 463l144-32 75 71-144 32z" />
        <path d="M808 460l35-7 59 55-36 9z" stroke="#18a0b8" />
      </g>
      <g stroke="#e3dd2b" strokeDasharray="8 4">
        <path d="M433 532l70 64 131-29-68-65" />
        <path d="M748 462l69 64 132-28-68-66" />
        <path d="M813 466l35-8M859 510l36-8M808 460l35-7M866 516l36-8" />
      </g>
      <g stroke="#8c1bb4">
        <path d="M494 512l85 79" strokeDasharray="24 5 5 5" />
        <path d="M809 442l85 81" strokeDasharray="40 6 3 6" />
        <path d="M584 513c20-5 38-8 49-4 12 3 42 23 42 36 0 9-15 18-40 18" strokeDasharray="16 4" />
      </g>

      {/* ucs icon */}
      <g strokeWidth="4">
        <path d="M43 602l-17-15" stroke="#3fa64c" />
        <path d="M44 602l35-7" stroke="#c25a66" />
        <path d="M44 603v-35" stroke="#4379bd" />
      </g>
      <path d="M42 556h9l-9 9h9" stroke="#1d5bc4" />
      <path d="M77 583l8 9M85 583l-8 9" stroke="#b3264a" />
      <path d="M26 575l4 4 3-4M30 579v5" stroke="#2d8a3a" />
    </svg>
  )
}

function ViewCube() {
  return (
    <svg width="100" height="80" viewBox="1168 190 100 80" fill="none" fontFamily="Open Sans, sans-serif" aria-label="View cube">
      <ellipse cx="1218" cy="240" rx="41" ry="20" stroke="#474e5a" strokeWidth="9" />
      <path d="M1196 201l22-5 23 7-32 10z" fill="#cfd0d1" />
      <path d="M1196 201l13 12v32l-12-12z" fill="#a9abad" />
      <path d="M1209 213l32-9v31l-32 10z" fill="#bebfc0" />
      <path d="M1196 201l13 12 32-9M1209 213v31" stroke="#54585e" strokeDasharray="4 1" />
      <g fill="#50545a" fontWeight="700">
        <text x="1213" y="231" fontSize="7" transform="rotate(-8 1213 231)">FRONT</text>
        <text x="1211" y="207" fontSize="6" transform="rotate(-6 1211 207)">TOP</text>
        <text x="1199" y="220" fontSize="6" transform="rotate(42 1199 220)">UP</text>
      </g>
      <g fill="#a3a8af" fontWeight="700" fontSize="12">
        <text x="1172" y="251" transform="rotate(-15 1172 251)">W</text>
        <text x="1249" y="230" fontSize="10" transform="rotate(20 1249 230)">E</text>
        <text x="1235" y="264" transform="rotate(-10 1235 264)">S</text>
      </g>
    </svg>
  )
}

function Viewport() {
  return (
    <main className="relative min-h-0 flex-1 bg-[#212630]">
      <Model />
      <p className="absolute top-1 left-[5px] text-[#e4e7eb]">[−][Custom View][Shaded]</p>
      <svg width="44" height="12" viewBox="0 0 44 12" fill="none" stroke="#f4f5f7" strokeWidth="1.5" className="absolute top-[6px] right-[10px]">
        <path d="M3 8h8" strokeWidth="2" /><path d="M19 4h5v5h-5zM21 4V2h5v5h-2M35 3l6 6M41 3l-6 6" />
      </svg>
      <div className="absolute top-[48px] right-[12px]"><ViewCube /></div>
      <button className="absolute top-[139px] right-[35px] h-[13px] w-[54px] rounded-[3px] border border-[#a4a8b0] bg-[#838892] pl-[3px] text-left text-[8px] leading-[11px] text-[#dcdfe4]">Unnamed</button>
      <nav aria-label="Navigation" className="absolute top-[173px] right-[5px] rounded-[3px] bg-[#555d66]">
        <svg width="26" height="170" viewBox="0 0 26 170" fill="none" stroke="#4a515a">
          <path d="M7 21h12v10H7zM4 26h18M13 17v18" />
          <path d="M8 60l-3-4M9 58v-7M12 57v-8M15 57v-7M18 59v-6M8 60q2 7 10 5v-7" strokeWidth="1.5" />
          <path d="M5 76l12 12M17 76L5 88M18 84l4 6" strokeDasharray="3 2" />
          <path d="M13 103v20M4 113h18M8 108v10M18 108v10" />
          <path d="M4 135h18v5H4zM6 140h11v14H6zM10 144l4 3-4 3z" />
        </svg>
      </nav>
      <div className="absolute top-[227px] left-[369px] flex h-[18px] items-center gap-4 border border-[#17191c] bg-[#959595] pr-[3px] pl-[3px] text-[#16181b]">
        <label htmlFor="height" className="whitespace-nowrap">Specify height of extrusion or</label>
        <svg width="8" height="9" viewBox="0 0 8 9" fill="none"><path d="M0 0h8v9H0z" fill="#e9e9e9" /><path d="M4 1v5M2 4l2 2 2-2M2 8h4" stroke="#444" /></svg>
      </div>
      <input id="height" defaultValue="3.8" className="absolute top-[241px] left-[401px] h-[16px] w-[37px] border border-[#2d4a5a] bg-white px-[3px] text-[9px] text-[#222] outline-none" />
    </main>
  )
}

const options = ['Direction', 'Path', 'Taper angle', 'Expression']

function CommandLine() {
  return (
    <section className="flex shrink-0 border-t border-[#3b4354]">
      <div className="flex w-[22px] shrink-0 flex-col items-center gap-[5px] bg-[#262c38] pt-1">
        <svg width="14" height="5" viewBox="0 0 14 5"><path d="M0 1h14M0 4h14" stroke="#d5d9df" strokeDasharray="2 1" /></svg>
        <button aria-label="Close command line"><Glyph name="close" size={11} /></button>
        <button aria-label="Customize command line"><Glyph name="wrench" size={13} /></button>
      </div>
      <div className="mr-[3px] min-w-0 flex-1 bg-[#c8c8c8] font-['DejaVu_Sans_Mono',monospace] text-[9px] leading-[12px] whitespace-pre text-[#16181b]">
        <div className="px-[2px] pt-[5px] pb-[2px]">
          <p>Select objects to extrude or [MOde]: 1 found</p>
          <p>Select objects to extrude or [MOde]:</p>
        </div>
        <div className="flex h-4 items-center border-t border-[#30343b] bg-white pl-[3px]">
          <svg width="10" height="11" viewBox="0 0 10 11"><path d="M0 2l2-2h8v8l-2 3H0z" fill="#6fb4e6" /><path d="M0 2h8v8H0z" fill="#a4d2f3" /></svg>
          <svg width="6" height="4" viewBox="0 0 6 4" className="mr-[6px] ml-1"><path d="M0 0h6L3 4z" fill="#555" /></svg>
          <span className="mr-[5px] font-bold">EXTRUDE</span>
          <span className="mr-[10px]">Specify height of extrusion or</span>
          <span>[</span>
          {options.map((option, i) => (
            <button key={option} className={`bg-[#d3d3d6] px-px ${i < options.length - 1 ? 'mr-[5px]' : ''}`}>
              <span className="text-[#2020c8]">{option[0]}</span>{option.slice(1)}
            </button>
          ))}
          <span className="mr-[7px]">]</span>
          <span>{'<-3.5000>:'}</span>
          <input aria-label="Command" className="min-w-0 flex-1 bg-transparent outline-none" />
        </div>
      </div>
    </section>
  )
}

function StatusTool({ icon, label, on, caret }: { icon: string; label: string; on?: boolean; caret?: boolean }) {
  return (
    <>
      <button aria-label={label} aria-pressed={!!on} className={`flex h-[19px] w-[19px] items-center justify-center ${on ? 'bg-[#5b8ac0]' : ''}`}>
        <Glyph name={icon} />
      </button>
      {caret && <button aria-label={`${label} options`} className="flex w-[13px] justify-center"><Caret /></button>}
    </>
  )
}

function StatusBar() {
  return (
    <footer className="flex h-[26px] shrink-0 items-start justify-between pr-[4px]">
      <nav className="flex pl-[14px] text-[#b6bdc8]">
        <button className="h-4 w-[42px] rounded-b bg-[#3b4354] font-bold text-[#f0f2f5]">Model</button>
        <button className="ml-[5px] h-4 w-[45px] bg-[#29303d]">Layout1</button>
        <button className="ml-[6px] h-4 w-[50px] bg-[#29303d]">Layout2</button>
        <button aria-label="New layout" className="ml-[4px] flex h-4 w-4 items-center justify-center"><Glyph name="plus" size={9} /></button>
      </nav>
      <div className="flex h-[22px] items-center gap-[2px] bg-[#1f2733] pt-px [&>div]:flex [&>div]:h-[21px] [&>div]:items-center [&>div]:bg-[#333b4a]">
        <div><button className="w-[38px]">MODEL</button></div>
        <div><StatusTool icon="grid" label="Grid" /><StatusTool icon="snap" label="Snap" caret /></div>
        <div>
          <StatusTool icon="ortho" label="Ortho" />
          <StatusTool icon="polar" label="Polar" caret />
          <StatusTool icon="isoplane" label="Isodraft" caret />
          <StatusTool icon="otrack" label="Tracking" on />
          <StatusTool icon="osnap" label="Object snap" on caret />
        </div>
        <div>
          <StatusTool icon="annoVis" label="Annotation visibility" on />
          <StatusTool icon="annoAuto" label="Auto scale" />
          <StatusTool icon="anno" label="Annotation scale" />
          <button className="flex w-[27px] items-center justify-center gap-1">1:1<Caret /></button>
        </div>
        <div><StatusTool icon="gear" label="Workspace" caret /></div>
        <div><StatusTool icon="plus" label="Annotation monitor" /></div>
        <div><StatusTool icon="units" label="Quick properties" /></div>
        <div><StatusTool icon="isolate" label="Isolate objects" on /></div>
        <div><StatusTool icon="hardware" label="Hardware acceleration" /></div>
        <div><StatusTool icon="clean" label="Clean screen" /><StatusTool icon="menu" label="Customization" /></div>
      </div>
    </footer>
  )
}

export default function App() {
  return (
    <div className="flex h-screen min-h-[400px] flex-col overflow-hidden border border-[#1b6f8c] bg-[#1f2733] font-['Open_Sans','Noto_Sans',sans-serif] text-[9px] leading-[14px] text-[#e1e4e9]">
      <Header />
      <Ribbon />
      <FileTabs />
      <Viewport />
      <CommandLine />
      <StatusBar />
    </div>
  )
}
